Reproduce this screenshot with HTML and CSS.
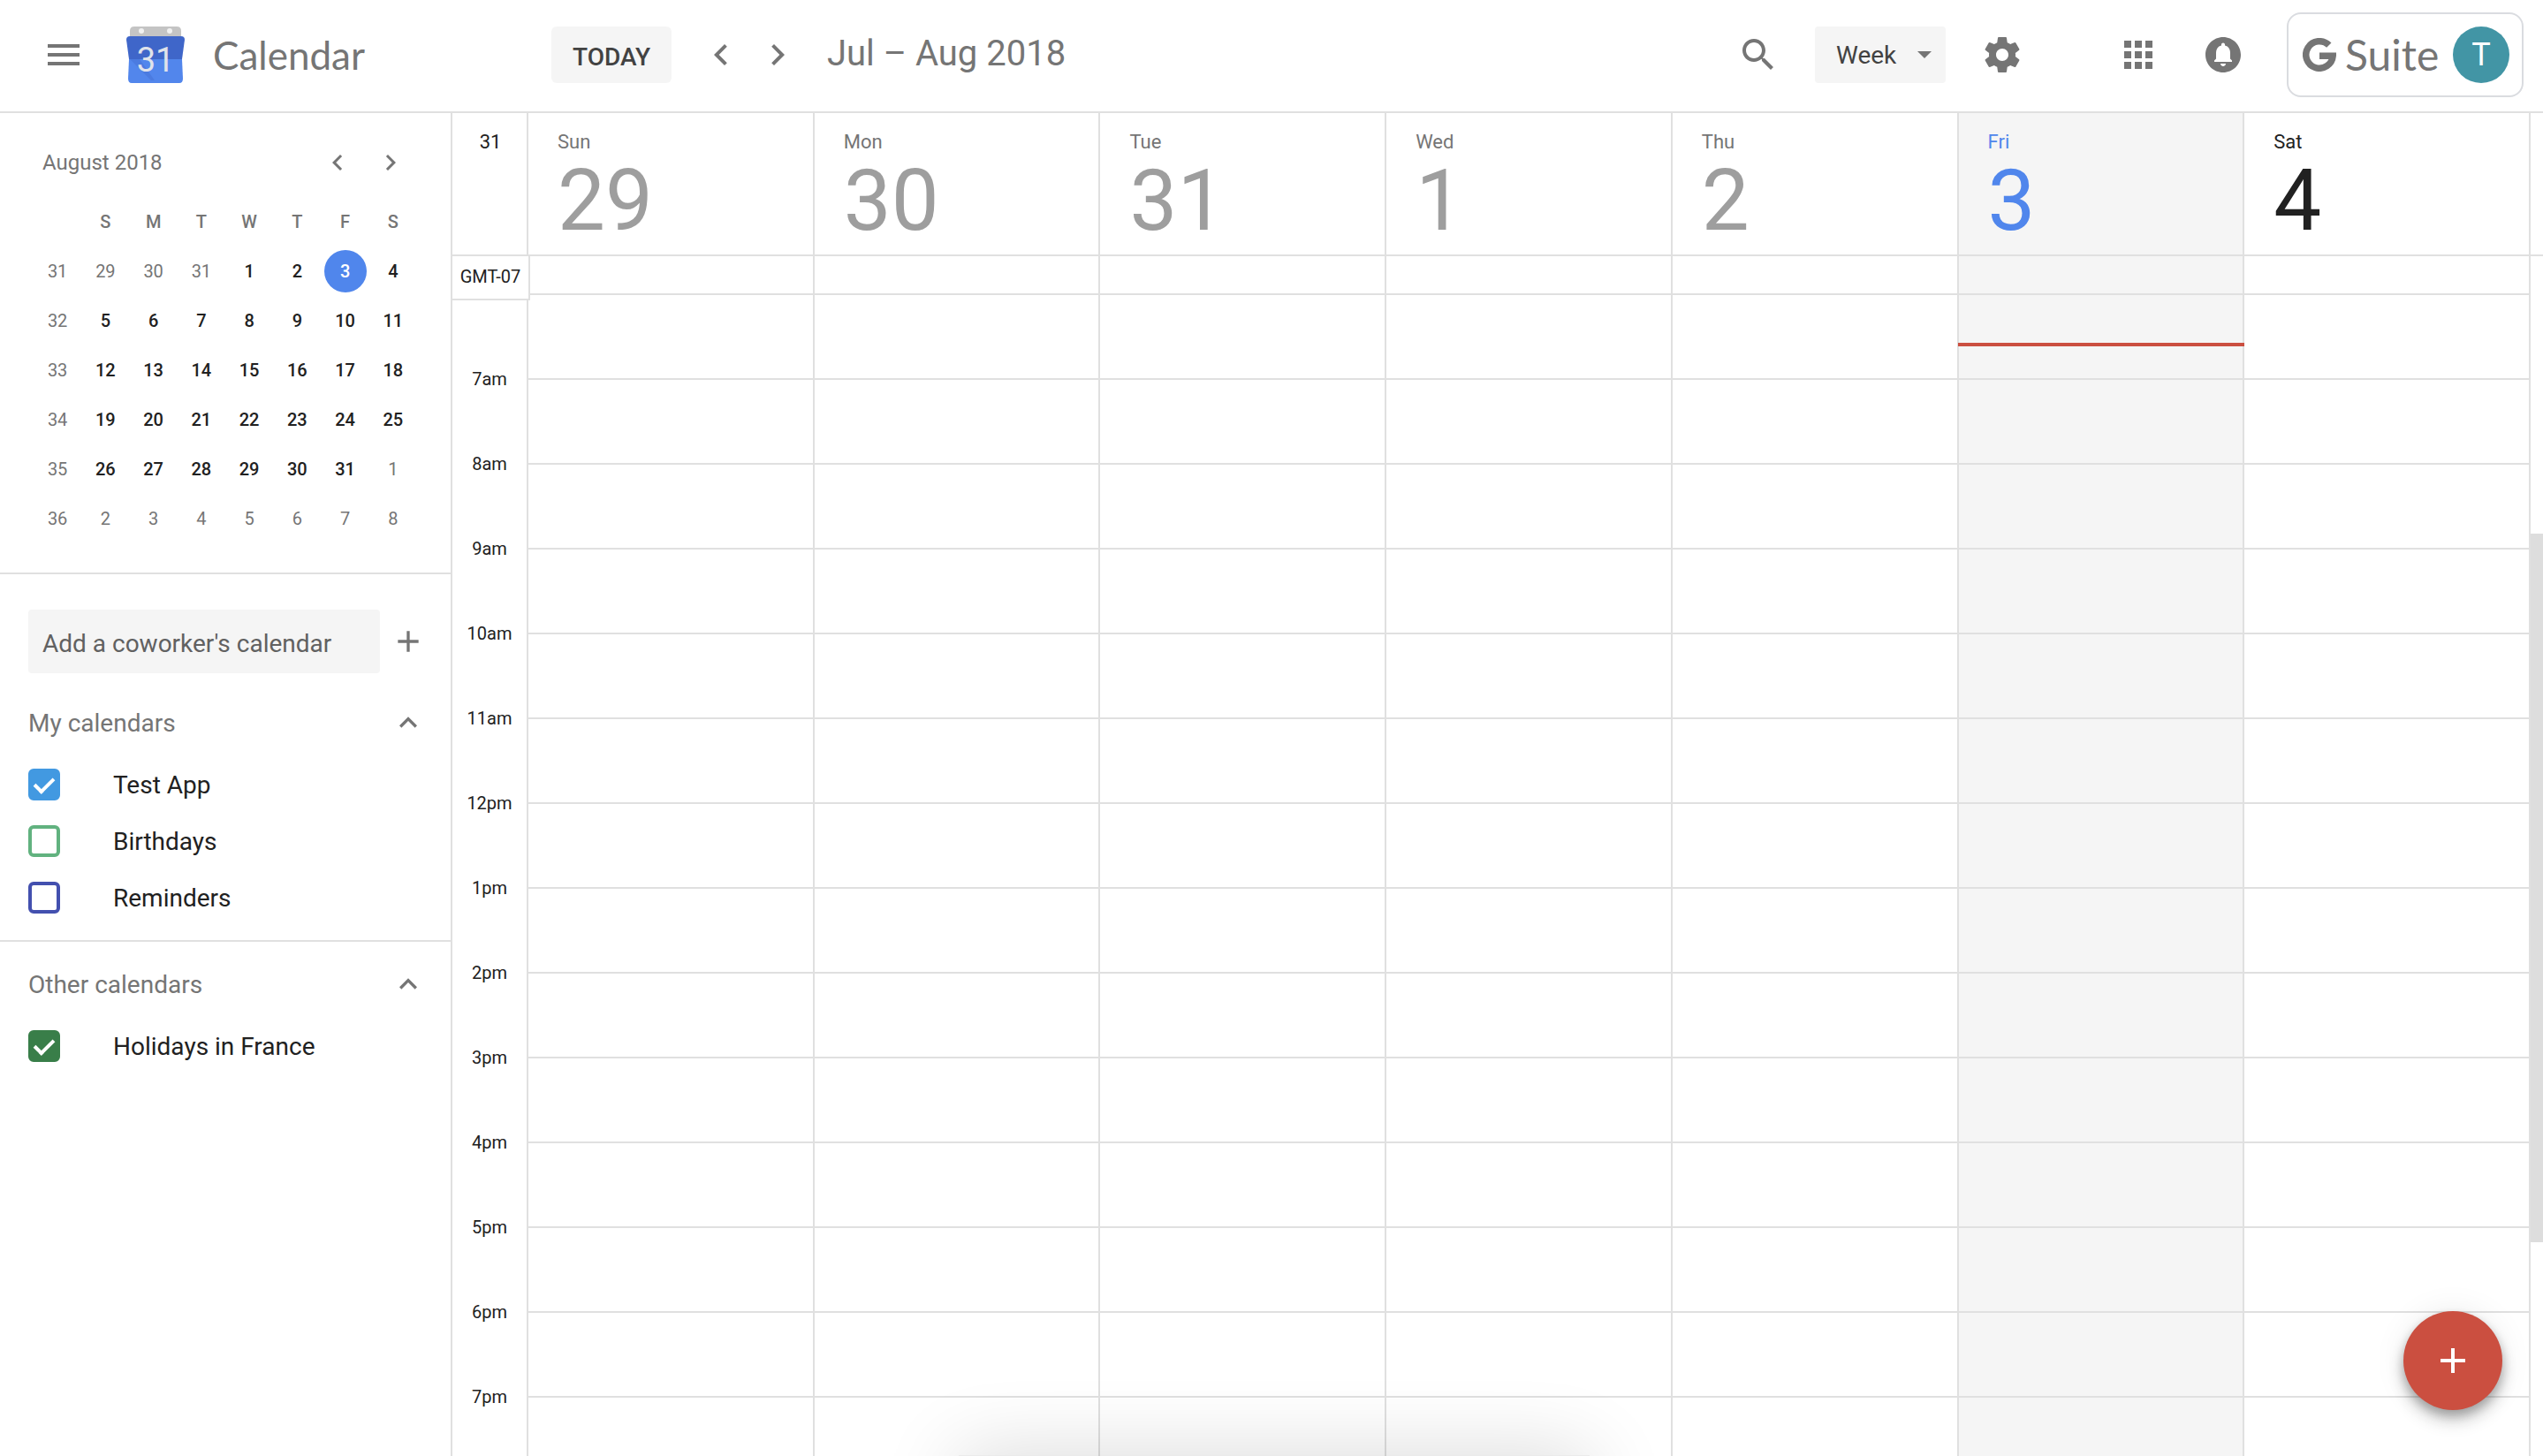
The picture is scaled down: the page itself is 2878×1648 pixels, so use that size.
FILE: index.html
```html
<!DOCTYPE html>
<html lang="en">
<head>
<meta charset="utf-8">
<title>Calendar</title>
<meta name="viewport" content="width=device-width, initial-scale=1">
<link rel="stylesheet" href="styles.css">
</head>
<body>
<header class="topbar">
  <button class="icon-button menu-button" aria-label="Main menu"><svg class="icon" viewBox="0 0 24 24"><path d="M3 18h18v-2H3v2zm0-5h18v-2H3v2zm0-7v2h18V6H3z"/></svg></button>
  <a class="brand" href="#">
    <svg class="brand-logo" viewBox="0 0 66 64" aria-hidden="true">
      <path fill="#c4c4c4" d="M4 14V5q0-5 5-5h48q5 0 5 5v9z"/>
      <circle cx="17" cy="5" r="3" fill="#f1f1f1"/><circle cx="49" cy="5" r="3" fill="#f1f1f1"/>
      <path fill="#3f66c9" d="M0 15q0-4 4-4h58q4 0 4 4l-3 22H3z"/>
      <path fill="#5286ec" d="M3 37h60l1 22q0 5-4 5H6q-4 0-4-5z"/>
      <path fill="#4b7be0" d="M4 37h11l17 24H28z"/>
      <text x="33" y="51" text-anchor="middle" font-size="38" fill="#e0e3ea">31</text>
    </svg>
    <span class="brand-name">Calendar</span>
  </a>
  <button class="text-button today-button">TODAY</button>
  <button class="icon-button" aria-label="Previous week"><svg class="icon" viewBox="0 0 24 24"><path d="M15.41 7.41L14 6l-6 6 6 6 1.41-1.41L10.83 12z"/></svg></button>
  <button class="icon-button next-button" aria-label="Next week"><svg class="icon" viewBox="0 0 24 24"><path d="M10 6L8.59 7.41 13.17 12l-4.58 4.59L10 18l6-6z"/></svg></button>
  <h1 class="range">Jul – Aug 2018</h1>
  <button class="icon-button search-button" aria-label="Search"><svg class="icon" viewBox="0 0 24 24"><path d="M15.5 14h-.79l-.28-.27C15.41 12.59 16 11.11 16 9.5 16 5.91 13.09 3 9.5 3S3 5.91 3 9.5 5.91 16 9.5 16c1.61 0 3.09-.59 4.23-1.57l.27.28v.79l5 4.99L20.49 19l-4.99-5zm-6 0C7.01 14 5 11.99 5 9.5S7.01 5 9.5 5 14 7.01 14 9.5 11.99 14 9.5 14z"/></svg></button>
  <label class="view-picker">
    <select aria-label="View"><option>Week</option></select>
  </label>
  <button class="icon-button settings-button" aria-label="Settings"><svg class="icon" viewBox="0 0 24 24"><path d="M19.43 12.98c.04-.32.07-.64.07-.98s-.03-.66-.07-.98l2.11-1.65c.19-.15.24-.42.12-.64l-2-3.46c-.12-.22-.39-.3-.61-.22l-2.49 1c-.52-.4-1.08-.73-1.69-.98l-.38-2.65C14.46 2.18 14.25 2 14 2h-4c-.25 0-.46.18-.49.42l-.38 2.65c-.61.25-1.17.59-1.69.98l-2.49-1c-.23-.09-.49 0-.61.22l-2 3.46c-.13.22-.07.49.12.64l2.11 1.65c-.04.32-.07.65-.07.98s.03.66.07.98l-2.11 1.65c-.19.15-.24.42-.12.64l2 3.46c.12.22.39.3.61.22l2.49-1c.52.4 1.08.73 1.69.98l.38 2.65c.03.24.24.42.49.42h4c.25 0 .46-.18.49-.42l.38-2.65c.61-.25 1.17-.59 1.69-.98l2.49 1c.23.09.49 0 .61-.22l2-3.46c.12-.22.07-.49-.12-.64l-2.11-1.65zM12 15.5c-1.93 0-3.5-1.57-3.5-3.5s1.57-3.5 3.5-3.5 3.5 1.57 3.5 3.5-1.57 3.5-3.5 3.5z"/></svg></button>
  <button class="icon-button apps-button" aria-label="Google apps"><svg class="icon" viewBox="0 0 24 24"><path d="M4 8h4V4H4v4zm6 12h4v-4h-4v4zm-6 0h4v-4H4v4zm0-6h4v-4H4v4zm6 0h4v-4h-4v4zm6-10v4h4V4h-4zm-6 4h4V4h-4v4zm6 6h4v-4h-4v4zm0 6h4v-4h-4v4z"/></svg></button>
  <button class="icon-button bell-button" aria-label="Notifications"><svg class="icon" viewBox="0 0 24 24"><path fill-rule="evenodd" d="M12 2C6.48 2 2 6.48 2 12s4.480 10 10 10 10-4.480 10-10S17.520 2 12 2zm0 16.500c-.83 0-1.500-.67-1.500-1.500h3c0 .83-.67 1.500-1.500 1.500zm5-2.500H7v-.75l1-1V11c0-2.120 1-3.800 3-4.250v-.5c0-.55.45-1 1-1s1 .45 1 1v.5c2 .45 3 2.130 3 4.250v3.250l1 1V16z"/></svg></button>
  <a class="account" href="#">
    <span class="suite"><svg class="suite-g" viewBox="0 0 38 38" aria-hidden="true"><path fill="none" stroke="#757575" stroke-width="7.500" d="M29.800 8.200A15.250 15.250 0 1 0 34.200 20.250H19"/></svg>Suite</span>
    <span class="avatar">T</span>
  </a>
</header>
<div class="layout">
  <aside class="sidebar">
    <section class="mini">
      <div class="mini-head">
        <h2 class="mini-title">August 2018</h2>
        <button class="icon-button small" aria-label="Previous month"><svg class="icon" viewBox="0 0 24 24"><path d="M15.410 7.410L14 6l-6 6 6 6 1.410-1.410L10.830 12z"/></svg></button>
        <button class="icon-button small" aria-label="Next month"><svg class="icon" viewBox="0 0 24 24"><path d="M10 6L8.590 7.410 13.170 12l-4.580 4.590L10 18l6-6z"/></svg></button>
      </div>
      <table class="mini-table">
        <thead><tr><th></th><th>S</th><th>M</th><th>T</th><th>W</th><th>T</th><th>F</th><th>S</th></tr></thead>
        <tbody>
          <tr><th>31</th><td class="off">29</td><td class="off">30</td><td class="off">31</td><td>1</td><td>2</td><td><span class="now">3</span></td><td>4</td></tr>
          <tr><th>32</th><td>5</td><td>6</td><td>7</td><td>8</td><td>9</td><td>10</td><td>11</td></tr>
          <tr><th>33</th><td>12</td><td>13</td><td>14</td><td>15</td><td>16</td><td>17</td><td>18</td></tr>
          <tr><th>34</th><td>19</td><td>20</td><td>21</td><td>22</td><td>23</td><td>24</td><td>25</td></tr>
          <tr><th>35</th><td>26</td><td>27</td><td>28</td><td>29</td><td>30</td><td>31</td><td class="off">1</td></tr>
          <tr><th>36</th><td class="off">2</td><td class="off">3</td><td class="off">4</td><td class="off">5</td><td class="off">6</td><td class="off">7</td><td class="off">8</td></tr>
        </tbody>
      </table>
    </section>
    <section class="calendars">
      <div class="add-row">
        <input class="add-input" type="text" placeholder="Add a coworker's calendar" aria-label="Add a coworker's calendar">
        <button class="icon-button medium" aria-label="Add calendar"><svg class="icon" viewBox="0 0 24 24"><path d="M19 13h-6v6h-2v-6H5v-2h6V5h2v6h6z"/></svg></button>
      </div>
      <div class="group-head">
        <h2 class="group-title">My calendars</h2>
        <button class="icon-button medium" aria-label="Collapse my calendars"><svg class="icon" viewBox="0 0 24 24"><path d="M12 8l-6 6 1.410 1.410L12 10.830l4.590 4.580L18 14z"/></svg></button>
      </div>
      <label class="entry blue"><input type="checkbox" checked>Test App</label>
      <label class="entry green"><input type="checkbox">Birthdays</label>
      <label class="entry indigo"><input type="checkbox">Reminders</label>
    </section>
    <section class="others">
      <div class="group-head">
        <h2 class="group-title">Other calendars</h2>
        <button class="icon-button medium" aria-label="Collapse other calendars"><svg class="icon" viewBox="0 0 24 24"><path d="M12 8l-6 6 1.410 1.410L12 10.830l4.590 4.580L18 14z"/></svg></button>
      </div>
      <label class="entry forest"><input type="checkbox" checked>Holidays in France</label>
    </section>
  </aside>
  <main class="week">
    <div class="week-head">
      <div class="week-number">31</div>
      <div class="day past"><span class="name">Sun</span><span class="date">29</span></div>
      <div class="day past"><span class="name">Mon</span><span class="date">30</span></div>
      <div class="day past"><span class="name">Tue</span><span class="date">31</span></div>
      <div class="day past"><span class="name">Wed</span><span class="date">1</span></div>
      <div class="day past"><span class="name">Thu</span><span class="date">2</span></div>
      <div class="day today"><span class="name">Fri</span><span class="date">3</span></div>
      <div class="day"><span class="name">Sat</span><span class="date">4</span></div>
    </div>
    <div class="week-body">
      <div class="zone">GMT-07</div>
      <div class="times">
        <span>6am</span><span>7am</span><span>8am</span><span>9am</span><span>10am</span><span>11am</span><span>12pm</span><span>1pm</span><span>2pm</span><span>3pm</span><span>4pm</span><span>5pm</span><span>6pm</span><span>7pm</span>
      </div>
      <div class="column"></div>
      <div class="column"></div>
      <div class="column"></div>
      <div class="column"></div>
      <div class="column"></div>
      <div class="column today"><div class="now-line"></div></div>
      <div class="column"></div>
      <div class="scrollbar"><div class="thumb"></div></div>
    </div>
  </main>
</div>
<button class="fab" aria-label="Create event"><svg viewBox="0 0 28 28" aria-hidden="true"><path d="M12 0h4v12h12v4H16v12h-4V16H0v-4h12z"/></svg></button>
<div class="dock-shadow"></div>
</body>
</html>
```

FILE: styles.css
```css
:root {
  --line: #e0e0e0;
  --grey: #757575;
  --ink: #212121;
  --fill: #f5f5f5;
  --hour: 96px;
}

*, *::before, *::after { box-sizing: border-box; }

body {
  margin: 0;
  height: 100vh;
  overflow: hidden;
  display: flex;
  flex-direction: column;
  background: #fff;
  color: var(--ink);
  font-family: Roboto, "Liberation Sans", sans-serif;
  font-size: 28px;
}

h1, h2 { margin: 0; font-weight: 400; }
a { color: inherit; text-decoration: none; }

button, input, select {
  margin: 0;
  padding: 0;
  border: 0;
  font: inherit;
  color: inherit;
}

/* Top bar */
.topbar {
  flex: none;
  display: flex;
  align-items: center;
  height: 128px;
  padding: 0 22px 2px 48px;
  border-bottom: 2px solid var(--line);
}

.icon-button {
  flex: none;
  width: 48px;
  height: 48px;
  background: none;
  color: var(--grey);
}
.icon-button.medium { width: 40px; height: 40px; }
.icon-button.small { width: 36px; height: 36px; }
.icon { display: block; width: 100%; height: 100%; fill: currentColor; }

.brand { display: flex; align-items: center; width: 481px; margin-left: 47px; }
.brand-logo { width: 66px; height: 64px; }
.brand-name {
  margin-left: 32px;
  color: var(--grey);
  font-family: Lato, Roboto, sans-serif;
  font-size: 44px;
  line-height: 64px;
}

.text-button {
  height: 64px;
  border-radius: 6px;
  background: var(--fill);
  color: #424242;
  font-weight: 500;
}
.today-button { width: 136px; padding-top: 4px; margin-right: 32px; }
.next-button { margin-left: 16px; }
.range {
  margin-left: 32px;
  margin-right: auto;
  padding-bottom: 2px;
  color: var(--grey);
  font-size: 40px;
  line-height: 48px;
  white-space: nowrap;
}

.view-picker {
  position: relative;
  width: 148px;
  margin: 0 40px;
}
.view-picker select {
  display: block;
  width: 100%;
  height: 64px;
  padding: 0 0 0 24px;
  border-radius: 4px;
  appearance: none;
  background: var(--fill);
  color: #424242;
}
.view-picker::after {
  content: "";
  position: absolute;
  right: 16px;
  top: 28px;
  border: 8px solid transparent;
  border-top-color: var(--grey);
  border-bottom: 0;
}
.apps-button { margin-left: 106px; }
.bell-button { margin-left: 48px; }

.account {
  display: flex;
  align-items: center;
  justify-content: space-between;
  width: 268px;
  height: 96px;
  margin-left: 48px;
  padding: 0 14px 0 16px;
  border: 2px solid #dadce0;
  border-radius: 16px;
}
.suite {
  display: flex;
  align-items: center;
  gap: 10px;
  color: var(--grey);
  font-family: Lato, Roboto, sans-serif;
  font-size: 48px;
  line-height: 60px;
}
.suite-g { width: 38px; height: 38px; }
.avatar {
  width: 64px;
  border-radius: 50%;
  background: #4295a5;
  color: #fff;
  font-size: 36px;
  line-height: 64px;
  text-align: center;
}

/* Sidebar */
.layout { flex: 1; min-height: 0; display: flex; }
.sidebar { flex: none; width: 512px; border-right: 2px solid var(--line); }

.mini { padding: 38px 36px 33px 38px; border-bottom: 2px solid var(--line); }
.mini-head { display: flex; align-items: center; gap: 24px; padding: 0 14px 0 10px; }
.mini-title { margin-right: auto; color: var(--grey); font-size: 24px; line-height: 36px; }
.mini-table {
  width: 434px;
  margin-top: 21px;
  border-collapse: collapse;
  table-layout: fixed;
  font-size: 20px;
  text-align: center;
}
.mini-table th, .mini-table td { height: 56px; padding: 0; font-weight: 500; }
.mini-table th, .mini-table .off { color: var(--grey); }
.mini-table tbody th, .mini-table .off { font-weight: 400; }
.now {
  display: block;
  width: 48px;
  margin: 0 auto;
  border-radius: 50%;
  background: #5086ec;
  color: #fff;
  line-height: 48px;
}

.calendars { padding: 40px 28px 16px 32px; border-bottom: 2px solid var(--line); }
.others { padding: 16px 28px 0 32px; }
.add-row, .group-head { display: flex; align-items: center; justify-content: space-between; }
.add-input {
  width: 398px;
  height: 72px;
  padding: 4px 16px 0;
  border-radius: 4px;
  background: var(--fill);
}
.add-input::placeholder { color: #616161; opacity: 1; }
.group-head { height: 64px; margin-bottom: 6px; }
.add-row + .group-head { margin-top: 24px; }
.group-title { padding-top: 2px; color: var(--grey); font-size: 28px; line-height: 32px; }

.entry { display: flex; align-items: center; gap: 60px; height: 64px; }
.entry input {
  display: grid;
  place-items: center;
  width: 36px;
  height: 36px;
  border: 4px solid var(--tint);
  border-radius: 6px;
  appearance: none;
}
.entry input:checked { background: var(--tint); }
.entry input:checked::after {
  content: "";
  width: 22px;
  height: 13px;
  margin-top: -4px;
  border: solid #fff;
  border-width: 0 0 4px 4px;
  transform: rotate(-45deg);
}
.blue { --tint: #4299e1; }
.green { --tint: #61b27f; }
.indigo { --tint: #4350af; }
.forest { --tint: #397e49; }

/* Week grid */
.week { flex: 1; min-width: 0; display: flex; flex-direction: column; }
.week-head, .week-body {
  display: grid;
  grid-template-columns: 86px repeat(7, 1fr) 14px;
}
.week-head { height: 162px; border-bottom: 2px solid var(--line); }
.week-number, .day, .times, .column { border-right: 2px solid var(--line); }
.week-number { padding: 19px 0 0 2px; font-size: 22px; line-height: 28px; text-align: center; }
.day { display: flex; flex-direction: column; padding: 19px 0 0 33px; }
.day.past { color: #9e9e9e; }
.day.past .name { color: var(--grey); }
.name { font-size: 22px; line-height: 28px; }
.date { font-size: 96px; line-height: 104px; }
.today { background: var(--fill); }
.day.today { color: #5086ec; }

.week-body { position: relative; flex: 1; min-height: 0; overflow: hidden; }
.zone {
  position: absolute;
  left: 0;
  top: 0;
  width: 88px;
  height: 50px;
  border: solid var(--line);
  border-width: 0 2px 2px 0;
  background: #fff;
  font-size: 20px;
  line-height: 46px;
  text-align: center;
}
.times { display: flex; flex-direction: column; font-size: 20px; line-height: var(--hour); text-align: center; }
.times span { flex: none; height: var(--hour); }
.times span:first-child { margin-top: -5px; }
.column {
  position: relative;
  background-image: linear-gradient(var(--line) 2px, transparent 2px);
  background-size: 100% var(--hour);
  background-position: 0 42px;
}
.now-line { position: absolute; left: -1px; right: -2px; top: 98px; height: 4px; background: #cb4f40; }
.scrollbar { display: grid; grid-template-rows: 314fr 802fr 242fr; }
.thumb { grid-row: 2; background: #ddd; }

/* Floating items */
.fab {
  position: fixed;
  right: 46px;
  bottom: 52px;
  display: grid;
  place-items: center;
  width: 112px;
  height: 112px;
  border-radius: 50%;
  background: #cb4f40;
  box-shadow: 0 12px 20px rgba(0, 0, 0, .19), 0 0 36px rgba(0, 0, 0, .08), 0 6px 12px rgba(0, 0, 0, .23);
}
.fab svg { width: 28px; height: 28px; fill: #fff; }
.dock-shadow {
  position: fixed;
  left: 37.7%;
  right: 37.5%;
  bottom: -79px;
  height: 80px;
  background: rgba(0, 0, 0, .08);
  box-shadow: 0 0 90px rgba(0, 0, 0, .16);
  pointer-events: none;
}
```
